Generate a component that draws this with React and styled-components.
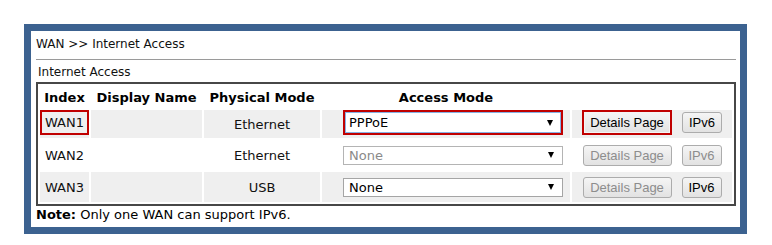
import { createGlobalStyle, styled } from "styled-components"

const Global = createGlobalStyle`
    body {
        margin: 0;
        background: #ffffff;
        font-family: "DejaVu Sans", Verdana, sans-serif;
        color: #000;
    }
`

const Page = styled.div`
    padding: 24px 0 0 24px;
`

const Frame = styled.div`
    width: 723px;
    box-sizing: border-box;
    border: 7px solid #3c6290;
    background: #ffffff;
    padding: 0 4px 5px 5px;
`

const Title = styled.div`
    font-size: 12px;
    line-height: 15px;
    padding: 6px 0 7px 0;
    border-bottom: 1px solid #9a9a9a;
    color: #111;
`

const SubTitle = styled.div`
    font-size: 12px;
    line-height: 15px;
    margin: 5px 0 2px 2px;
    color: #111;
`

const Table = styled.table`
    width: 700px;
    table-layout: fixed;
    border-collapse: separate;
    border-spacing: 2px;
    border: 2px solid #474747;
    box-sizing: border-box;
`

const Head = styled.th`
    font-size: 13px;
    font-weight: 700;
    height: 22px;
    padding: 0;
    text-align: center;
    vertical-align: middle;
    background: #ffffff;
`

const Row = styled.tr`
    background: ${(p) => (p.$shade ? "#efefef" : "#ffffff")};
`

const Cell = styled.td`
    font-size: 13px;
    height: ${(p) => p.$h || 30}px;
    padding: 0;
    text-align: center;
    vertical-align: middle;
    color: #111;
`

const ModeCell = styled(Cell)`
    text-align: left;
    padding-left: 21px;
`

const IndexMark = styled.div`
    height: 25px;
    box-sizing: border-box;
    border: 2px solid ${(p) => (p.$mark ? "#c00000" : "transparent")};
    display: flex;
    align-items: center;
    justify-content: center;
    margin-bottom: 3px;
`

const SelectBox = styled.div`
    width: 220px;
    height: ${(p) => (p.$mark ? 25 : 19)}px;
    box-sizing: border-box;
    border: ${(p) => (p.$mark ? "2px solid #c00000" : `1px solid ${p.$off ? "#b4b4b4" : "#a5a5a5"}`)};
    box-shadow: ${(p) => (p.$mark ? "inset 0 0 0 1px #86b2e4" : "none")};
    background: #ffffff;
    display: flex;
    align-items: center;
    justify-content: space-between;
    padding: 0 8px 0 ${(p) => (p.$mark ? 4 : 5)}px;
    font-size: 13px;
    color: ${(p) => (p.$off ? "#8a8a8a" : "#000")};
    margin-bottom: ${(p) => (p.$mark ? 3 : 0)}px;
`

const Arrow = styled.span`
    width: 0;
    height: 0;
    border-left: 3.5px solid transparent;
    border-right: 3.5px solid transparent;
    border-top: 6px solid #000;
`

const Actions = styled.div`
    display: flex;
    justify-content: center;
    align-items: center;
    gap: 10px;
    margin-bottom: ${(p) => (p.$top ? 3 : 0)}px;
`

const Button = styled.button`
    font-family: "Liberation Sans", Arial, sans-serif;
    font-size: 13px;
    width: ${(p) => (p.$mark ? 90 : p.$w)}px;
    height: ${(p) => (p.$mark ? 25 : 21)}px;
    box-sizing: border-box;
    padding: 0;
    border: ${(p) => (p.$mark ? "2px solid #c00000" : "1px solid #acacac")};
    box-shadow: ${(p) => (p.$mark ? "inset 0 0 0 1px #f4f4f4" : "none")};
    border-radius: ${(p) => (p.$mark ? 0 : 3)}px;
    background: linear-gradient(#f5f5f5, #e2e2e2);
    color: ${(p) => (p.disabled ? "#8d8d8d" : "#000")};
`

const Note = styled.div`
    font-size: 13px;
    line-height: 15px;
    margin-top: 1px;

    b {
        font-weight: 700;
    }
`

const rows = [
    { name: "WAN1", phys: "Ethernet", mode: "PPPoE", mark: true, shade: true, h: 28 },
    { name: "WAN2", phys: "Ethernet", mode: "None", off: true, ipv6Off: true },
    { name: "WAN3", phys: "USB", mode: "None", shade: true, detailsOff: true },
]

export default function App() {
    return (
        <>
            <Global />
            <Page>
                <Frame>
                    <Title>WAN &gt;&gt; Internet Access</Title>
                    <SubTitle>Internet Access</SubTitle>
                    <Table>
                        <colgroup>
                            <col style={{ width: 49 }} />
                            <col style={{ width: 111 }} />
                            <col style={{ width: 116 }} />
                            <col style={{ width: 248 }} />
                            <col style={{ width: 160 }} />
                        </colgroup>
                        <thead>
                            <tr>
                                <Head>Index</Head>
                                <Head>Display Name</Head>
                                <Head>Physical Mode</Head>
                                <Head>Access Mode</Head>
                                <Head></Head>
                            </tr>
                        </thead>
                        <tbody>
                            {rows.map((r) => (
                                <Row key={r.name} $shade={r.shade}>
                                    <Cell $h={r.h}>
                                        {r.mark ? <IndexMark $mark>{r.name}</IndexMark> : r.name}
                                    </Cell>
                                    <Cell $h={r.h}></Cell>
                                    <Cell $h={r.h}>{r.phys}</Cell>
                                    <ModeCell $h={r.h}>
                                        <SelectBox $mark={r.mark} $off={r.off}>
                                            <span>{r.mode}</span>
                                            <Arrow />
                                        </SelectBox>
                                    </ModeCell>
                                    <Cell $h={r.h}>
                                        <Actions $top={r.mark}>
                                            <Button $w={89} $mark={r.mark} disabled={r.off || r.detailsOff}>
                                                Details Page
                                            </Button>
                                            <Button $w={40} disabled={r.ipv6Off}>IPv6</Button>
                                        </Actions>
                                    </Cell>
                                </Row>
                            ))}
                        </tbody>
                    </Table>
                    <Note>
                        <b>Note:</b> Only one WAN can support IPv6.
                    </Note>
                </Frame>
            </Page>
        </>
    )
}
